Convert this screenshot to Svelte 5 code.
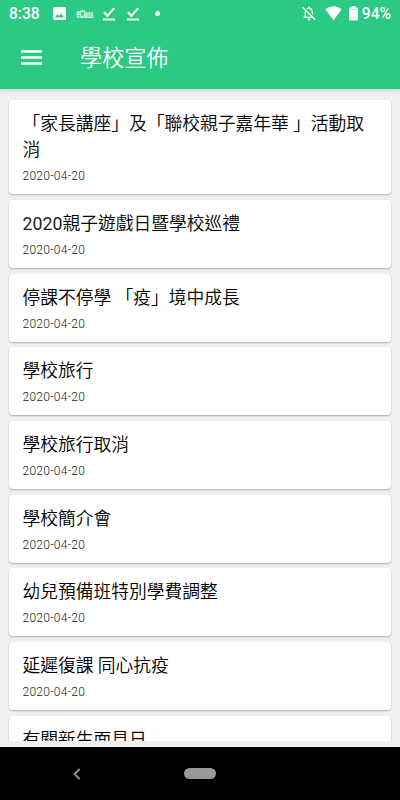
<script>
  const notices = [
    { title: '「家長講座」及「聯校親子嘉年華 」活動取消', date: '2020-04-20' },
    { year: '2020', title: '親子遊戲日暨學校巡禮', date: '2020-04-20' },
    { title: '停課不停學 「疫」境中成長', date: '2020-04-20' },
    { title: '學校旅行', date: '2020-04-20' },
    { title: '學校旅行取消', date: '2020-04-20' },
    { title: '學校簡介會', date: '2020-04-20' },
    { title: '幼兒預備班特別學費調整', date: '2020-04-20' },
    { title: '延遲復課 同心抗疫', date: '2020-04-20' },
    { title: '有關新生面見日', date: '' }
  ];
</script>

<div class="screen">
  <header>
    <div class="status">
      <span class="time">8:38</span>
      <svg class="photo" width="13" height="13" viewBox="0 0 13 13">
        <path fill="#fff" fill-rule="evenodd" d="M1.5 0h10A1.5 1.5 0 0 1 13 1.5v10a1.5 1.5 0 0 1-1.5 1.500h-10A1.5 1.5 0 0 1 0 11.5v-10A1.5 1.5 0 0 1 1.5 0zM2 10.5h9L8.2 6.2 6 9 4.300 7.300z" />
      </svg>
      <svg class="eclass" width="18" height="14" viewBox="0 0 18 14">
        <text transform="translate(.2 10.600) scale(.49 1)"><tspan font-size="13">e</tspan>Class</text>
      </svg>
      {#each [1, 2] as n (n)}
        <svg class="done" width="12" height="14" viewBox="0 0 12 14">
          <path fill="none" stroke="#fff" stroke-width="2" d="M.9 5.300l3.500 3.400L11.200 1.300" />
          <path fill="#fff" d="M0 11.500h12v2H0z" />
        </svg>
      {/each}
      <span class="dot"></span>
      <div class="right">
        <svg class="bell" width="14" height="15" viewBox="0 0 14 15" fill="none" stroke="#fff">
          <path stroke-width="1.300" d="M3.300 4.500v6.800M1.500 11.400h9.500M4.700 2.900Q7.200 1.500 9.400 3.300Q10.500 4.400 10.500 8.200M.6 1.200l12.600 12.600" />
          <path stroke-width="1.500" d="M7 .5v2M5.800 13.400h2.400" />
        </svg>
        <svg class="wifi" width="17" height="15" viewBox="0 0 17 15">
          <path fill="#fff" d="M.3 3.200Q8.500-2.700 16.700 3.200L8.500 14.200z" />
        </svg>
        <svg class="battery" width="9" height="15" viewBox="0 0 9 15">
          <path fill="#fff" d="M2.700 0h3.600v1.500H8q1 0 1 1v11q0 1-1 1H1q-1 0-1-1v-11q0-1 1-1h1.700z" />
          <path stroke="#2bc983" stroke-opacity=".35" d="M1 3.500h7" />
        </svg>
        <span class="level">94%</span>
      </div>
    </div>
    <div class="toolbar">
      <button aria-label="Menu">
        <svg width="21" height="16" viewBox="0 0 21 16">
          <path fill="none" stroke="#fff" stroke-width="2.400" d="M0 1.500h21M0 7.500h21M0 13.500h21" />
        </svg>
      </button>
      <h1>學校宣佈</h1>
    </div>
  </header>

  <main>
    {#each notices as notice (notice.title)}
      <article>
        <h2>{#if notice.year}<span>{notice.year}</span>{/if}{notice.title}</h2>
        {#if notice.date}
          <time>{notice.date}</time>
        {/if}
      </article>
    {/each}
  </main>

  <nav>
    <svg width="8" height="12" viewBox="0 0 8 12">
      <path fill="none" stroke="#999" stroke-width="1.800" d="M6.600.9L1.600 6l5 5.100" />
    </svg>
    <span class="home"></span>
  </nav>
</div>

<style>
  :global(body) {
    margin: 0;
    overflow: hidden;
  }

  .screen {
    display: flex;
    flex-direction: column;
    width: 400px;
    height: 800px;
    background: #f0f0f0;
    font-family: Roboto, "Noto Sans CJK TC", sans-serif;
  }

  header {
    position: relative;
    z-index: 1;
    flex: none;
    height: 89px;
    background: #2bc983;
    color: #fff;
    box-shadow: 0 1px 4px rgba(0, 0, 0, 0.16);
  }

  .status {
    display: flex;
    align-items: center;
    box-sizing: border-box;
    height: 27px;
    padding: 0 9px;
    font-size: 15.600px;
    font-weight: 500;
  }

  .time {
    width: 44px;
    padding-top: 1px;
  }

  .level {
    padding-top: 1px;
  }

  .eclass {
    margin-left: 10px;
    fill: #fff;
    font: bold 10.500px "Liberation Sans", sans-serif;
  }

  .done {
    margin: 0 3px 0 9px;
  }

  .dot {
    width: 5px;
    height: 5px;
    margin-left: 13px;
    border-radius: 50%;
    background: #fff;
  }

  .right {
    display: flex;
    align-items: center;
    margin-left: auto;
  }

  .wifi {
    margin-left: 9px;
  }

  .battery {
    margin: 0 4px 0 7px;
  }

  .toolbar {
    display: flex;
    align-items: center;
    height: 62px;
    padding-left: 21px;
  }

  button {
    display: flex;
    padding: 0;
    border: 0;
    background: none;
  }

  h1 {
    margin: 0 0 0 38px;
    font-size: 22.200px;
    font-weight: 350;
    line-height: 30px;
  }

  main {
    display: flex;
    flex: 1;
    flex-direction: column;
    gap: 5.720px;
    min-height: 0;
    padding: 11.100px 9px 0;
    overflow: hidden;
  }

  article {
    flex: none;
    box-sizing: border-box;
    min-height: 68px;
    padding: 11px 13.500px 10px;
    border-radius: 4px;
    background: #fff;
    box-shadow: 0 1px 2px rgba(0, 0, 0, 0.28);
  }

  h2 {
    margin: 0;
    color: #000;
    font-size: 17.750px;
    font-weight: 350;
    line-height: 26px;
  }

  h2 span {
    color: #222;
    font-weight: 400;
  }

  time {
    display: block;
    margin-top: 5px;
    color: #222;
    font-size: 12px;
    font-weight: 300;
    letter-spacing: 0.250px;
    line-height: 16px;
  }

  nav {
    display: flex;
    flex: none;
    align-items: center;
    box-sizing: border-box;
    height: 59px;
    padding-left: 73px;
    border-top: 6px solid #f0f0f0;
    background: #000;
  }

  .home {
    width: 32px;
    height: 11px;
    margin-left: 103px;
    border-radius: 6px;
    background: #999;
  }
</style>
